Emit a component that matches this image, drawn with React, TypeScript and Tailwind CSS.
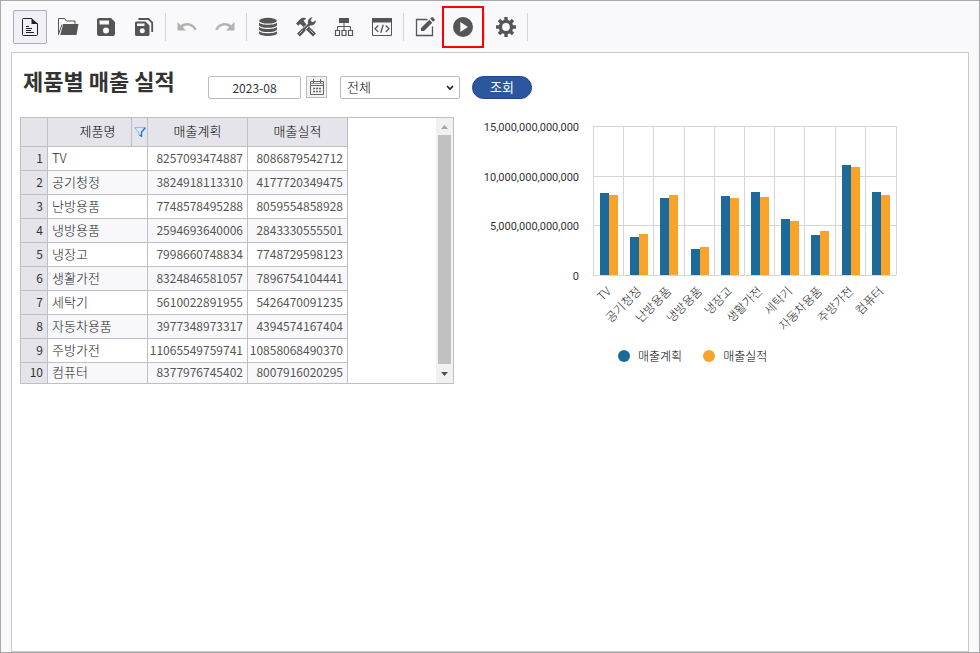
import { ReactNode } from 'react';

interface SalesRow {
    name: string;
    plan: number;
    actual: number;
}

const ROWS: SalesRow[] = [
    { name: 'TV', plan: 8257093474887, actual: 8086879542712 },
    { name: '공기청정', plan: 3824918113310, actual: 4177720349475 },
    { name: '난방용품', plan: 7748578495288, actual: 8059554858928 },
    { name: '냉방용품', plan: 2594693640006, actual: 2843330555501 },
    { name: '냉장고', plan: 7998660748834, actual: 7748729598123 },
    { name: '생활가전', plan: 8324846581057, actual: 7896754104441 },
    { name: '세탁기', plan: 5610022891955, actual: 5426470091235 },
    { name: '자동차용품', plan: 3977348973317, actual: 4394574167404 },
    { name: '주방가전', plan: 11065549759741, actual: 10858068490370 },
    { name: '컴퓨터', plan: 8377976745402, actual: 8007916020295 },
];

const PLAN_COLOR = '#1b6a9a';
const ACTUAL_COLOR = '#f9a429';

const Glyph = ({ children, className = 'w-5 h-5' }: { children: ReactNode; className?: string }) => (
    <svg viewBox="0 0 20 20" className={className} fill="currentColor" aria-hidden="true">
        {children}
    </svg>
);

const NewIcon = () => (
    <Glyph>
        <path d="M12 1.5H3.500a1 1 0 0 0-1 1v15a1 1 0 0 0 1 1h13a1 1 0 0 0 1-1V6.500" fill="none" stroke="#222" />
        <path d="M11.500 1l6.500 6h-6.500z" fill="#222" />
        <path d="M6 9.500h3M6 11.500h6M6 13.500h5M6 15.500h8" stroke="#222" />
    </Glyph>
);

const OpenIcon = () => (
    <Glyph className="w-[22px] h-5">
        <path d="M.5 17.500v-16h6l2 2.500h8.500v3" fill="none" stroke="currentColor" />
        <path d="M.5 17.500l3.500-10" fill="none" stroke="currentColor" />
        <path d="M5.200 7h15.300L18.500 18H2.300z" />
    </Glyph>
);

const SaveIcon = () => (
    <Glyph>
        <path
            fillRule="evenodd"
            d="M3 1h12l4 4v12a2 2 0 0 1-2 2H3a2 2 0 0 1-2-2V3a2 2 0 0 1 2-2zM3.500 3.500v4H13v-4zM10 10.500a3 3 0 1 0 0 6 3 3 0 0 0 0-6z"
        />
    </Glyph>
);

const SaveAllIcon = () => (
    <Glyph>
        <path
            fillRule="evenodd"
            d="M2.500 4.500h9l4 4v9a1.500 1.500 0 0 1-1.500 1.500H2.500A1.500 1.500 0 0 1 1 17.500V6a1.500 1.500 0 0 1 1.500-1.500zM3 6.500v2.500h7.500V6.500zM8.300 11.300a2.500 2.500 0 1 0 0 5 2.500 2.500 0 0 0 0-5z"
        />
        <path d="M4.500 2h10l3.700 3.700V15" fill="none" stroke="currentColor" strokeWidth="1.800" />
    </Glyph>
);

const UndoIcon = ({ flip = false }: { flip?: boolean }) => (
    <Glyph className={flip ? 'w-5 h-5 -scale-x-100 text-[#b2b2b2]' : 'w-5 h-5 text-[#b2b2b2]'}>
        <path d="M.5 5v8.500H9L5.700 10.300c3.300-2.800 9-2.500 11.800 3l2.300-.8C16.500 5.200 8.300 4.300 3.800 8.300z" />
    </Glyph>
);

const DataIcon = () => (
    <Glyph>
        <ellipse cx="10" cy="3.700" rx="9" ry="2.900" />
        <path d="M1 5.600c1.500 3 16.500 3 18 0v2.600c-1 3.400-17 3.400-18 0z" />
        <path d="M1 9.800c1.500 3 16.500 3 18 0v2.600c-1 3.400-17 3.400-18 0z" />
        <path d="M1 14c1.500 3 16.500 3 18 0v2.300c-1 3.600-17 3.600-18 0z" />
    </Glyph>
);

const ToolsIcon = () => (
    <Glyph>
        <path d="M0 6.500L4.300 2C6 .3 9 .2 10.300 1.600L7.500 3.500l1.300 2L20 16.500l-3 3L5.500 8 4 7 2.300 8.800z" />
        <path d="M1 16.500L12 6.400c-.6-2.900.9-5.700 4.400-6.200l-1.800 3.300 1.800 1.800 3.200-1.800c.4 3.300-2.100 5.300-5.100 4.800L4 19.500z" />
        <path d="M11.800 6.600L8.200 10.200M9.300 12.700l3.200-3.200" stroke="#f9f9fb" />
        <path d="M3.500 16.500l3-3M13.500 12.500l4 4" stroke="#f9f9fb" strokeWidth=".7" />
    </Glyph>
);

const TreeIcon = () => (
    <Glyph>
        <path d="M5 1h10v5H5z" />
        <path d="M10 6v7M3.500 13.500V9.500h13v4" fill="none" stroke="currentColor" />
        <path
            d="M1.500 13.500h4v5h-4zM8 13.500h4v5H8zM14.500 13.500h4v5h-4z"
            fill="none"
            stroke="currentColor"
            strokeWidth="1.200"
        />
    </Glyph>
);

const CodeIcon = () => (
    <Glyph>
        <path d="M0 1h20v4.500H0z" />
        <path d="M.5 5v13.500h19V5" fill="none" stroke="currentColor" />
        <path
            d="M6.300 8.500L3 11.700l3.300 3.200M13.700 8.500l3.300 3.200-3.300 3.200M11.200 7.800L8.800 15.700"
            fill="none"
            stroke="currentColor"
            strokeWidth="1.300"
        />
    </Glyph>
);

const EditIcon = () => (
    <Glyph>
        <path d="M12.500 2.500h-11v16h16v-9" fill="none" stroke="currentColor" strokeWidth="1.300" />
        <path d="M6 11l8.300-8.300 3 3L9 14H6z" />
        <path d="M15.200 1.800L16.500.5c.5-.4 1-.4 1.500 0l1.500 1.500c.4.5.4 1 0 1.500l-1.300 1.300z" />
    </Glyph>
);

const RunIcon = () => (
    <Glyph>
        <path fillRule="evenodd" d="M10 0a10 10 0 1 0 0 20 10 10 0 0 0 0-20zM7.300 5v10l7.700-5z" />
    </Glyph>
);

const GearIcon = () => (
    <Glyph>
        <circle cx="10" cy="10" r="5.600" fill="none" stroke="currentColor" strokeWidth="3.400" />
        <path
            d="M10 0v4.500M10 15.500V20M0 10h4.500M15.500 10H20M3 3l3 3M14 14l3 3M3 17l3-3M14 6l3-3"
            stroke="currentColor"
            strokeWidth="3.400"
        />
    </Glyph>
);

const CalendarIcon = () => (
    <svg viewBox="0 0 16 17" className="w-4 h-[17px]" fill="none" stroke="#666" aria-hidden="true">
        <path d="M1.500 2.500h13v13h-13zM1.500 6.500h13M4.500 0v4M11.500 0v4" />
        <path d="M1.500 4.500h13" stroke="#999" />
        <path d="M4 9.500h8M4 12.500h8" strokeWidth="1.500" strokeDasharray="2 1" />
    </svg>
);

const FilterIcon = () => (
    <svg viewBox="0 0 12 10" className="w-3 h-2.5" aria-hidden="true">
        <path d="M.7.700h10.600L7.500 5v4.300L4.700 7.500V5z" fill="#e4f0ff" stroke="#7fb0f0" />
        <path d="M11.300.700L7.500 5v4.300L5.500 8" fill="none" stroke="#2f6be0" strokeWidth="1.400" />
    </svg>
);

interface ToolButtonProps {
    label: string;
    children: ReactNode;
    className?: string;
}

const ToolButton = ({ label, children, className = 'w-[34px] h-[34px]' }: ToolButtonProps) => (
    <button
        type="button"
        aria-label={label}
        className={`flex shrink-0 items-center justify-center text-[#555] ${className}`}
    >
        {children}
    </button>
);

const Divider = () => <span className="w-px h-7 shrink-0 bg-[#d4d4d8]" />;

const Toolbar = () => (
    <header className="flex items-center h-12 px-3">
        <ToolButton label="새로 만들기" className="w-[34px] h-[34px] border border-[#adadb3] rounded-xs bg-[#f1f0f6]">
            <NewIcon />
        </ToolButton>
        <div className="flex items-center gap-1 pl-1">
            <ToolButton label="열기"><OpenIcon /></ToolButton>
            <ToolButton label="저장"><SaveIcon /></ToolButton>
            <ToolButton label="모두 저장"><SaveAllIcon /></ToolButton>
        </div>
        <div className="flex items-center gap-1 px-1">
            <Divider />
            <ToolButton label="실행 취소"><UndoIcon /></ToolButton>
            <ToolButton label="다시 실행"><UndoIcon flip /></ToolButton>
            <Divider />
        </div>
        <div className="flex items-center gap-1">
            <ToolButton label="데이터"><DataIcon /></ToolButton>
            <ToolButton label="도구"><ToolsIcon /></ToolButton>
            <ToolButton label="구조"><TreeIcon /></ToolButton>
            <ToolButton label="스크립트"><CodeIcon /></ToolButton>
            <Divider />
        </div>
        <div className="flex items-center pl-1">
            <ToolButton label="편집"><EditIcon /></ToolButton>
            <ToolButton label="실행" className="w-[42px] h-[42px] border-2 border-[#f00]"><RunIcon /></ToolButton>
            <Divider />
            <ToolButton label="설정" className="w-[42px] h-[34px]"><GearIcon /></ToolButton>
            <Divider />
        </div>
    </header>
);

const SearchBar = () => (
    <form className="flex items-center h-12 pl-[11px]" onSubmit={(e) => e.preventDefault()}>
        <h1 className="w-[185px] pb-3.5 text-[22px] leading-7 font-bold text-[#333] whitespace-nowrap">제품별 매출 실적</h1>
        <input
            type="text"
            aria-label="기준 월"
            defaultValue="2023-08"
            className="w-[93px] h-[23px] border border-[#bbb] rounded-xs bg-white text-center text-[12px] text-[#333]"
        />
        <button
            type="button"
            aria-label="달력"
            className="flex items-center justify-center w-[21px] h-[22px] ml-[5px] border border-[#bbb] bg-[#f2f2f2]"
        >
            <CalendarIcon />
        </button>
        <div className="relative ml-[13px]">
            <select
                aria-label="제품 구분"
                className="block w-[120px] h-[23px] pl-1.5 appearance-none border border-[#bbb] rounded-xs bg-white text-[13px] leading-5 font-light text-black"
            >
                <option>전체</option>
            </select>
            <svg viewBox="0 0 8 6" className="absolute right-1.5 top-[9px] w-2 h-1.5 pointer-events-none" aria-hidden="true">
                <path d="M1 1l3 3 3-3" fill="none" stroke="#222" strokeWidth="1.600" />
            </svg>
        </div>
        <button type="submit" className="w-[60px] h-[23px] ml-3 rounded-full border border-[#1f4690] bg-[#2c579f] text-[13px] leading-5 text-white">
            조회
        </button>
    </form>
);

const SalesGrid = () => (
    <div className="flex items-start justify-between w-[434px] h-[267px] shrink-0 border border-[#c0c0c4] overflow-hidden">
        <table className="w-[327px] table-fixed border-separate border-spacing-0 font-light text-[#222]">
            <thead>
                <tr className="h-[29px] bg-[#e5e4ea] text-[13px] text-black">
                    <th className="w-[27px] border-r border-b border-[#c0c0c4]" />
                    <th className="w-[100px] p-0 border-r border-b border-[#c0c0c4] font-light">
                        <div className="flex h-7">
                            <span className="flex-1 pl-4 leading-[26px]">제품명</span>
                            <button type="button" aria-label="필터" className="flex items-center justify-center w-4 border-l border-[#c0c0c4]">
                                <FilterIcon />
                            </button>
                        </div>
                    </th>
                    <th className="w-[100px] p-0 pb-0.5 border-r border-b border-[#c0c0c4] font-light">매출계획</th>
                    <th className="w-[100px] p-0 pb-0.5 border-r border-b border-[#c0c0c4] font-light">매출실적</th>
                </tr>
            </thead>
            <tbody className="text-[12px] leading-4">
                {ROWS.map((row, i) => (
                    <tr key={row.name} className="h-6 last:h-[21px] even:bg-[#f8f8fb]">
                        <th className="p-0 pr-1 pb-0.5 border-r border-b border-[#c0c0c4] bg-[#e5e4ea] text-right font-normal text-[#333]">
                            {i + 1}
                        </th>
                        <td className="p-0 pl-1 pb-0.5 border-r border-b border-[#c0c0c4] text-[13px]">{row.name}</td>
                        <td className="p-0 pr-1 pb-0.5 border-r border-b border-[#c0c0c4] text-right font-normal text-[#555]">{row.plan}</td>
                        <td className="p-0 pr-1 pb-0.5 border-r border-b border-[#c0c0c4] text-right font-normal text-[#555]">{row.actual}</td>
                    </tr>
                ))}
            </tbody>
        </table>
        {/* Scroll bar */}
        <div className="flex flex-col items-center w-[17px] h-full bg-[#f1f1f1]">
            <svg viewBox="0 0 17 17" className="w-[17px] h-[17px]" aria-hidden="true">
                <path d="M5 11h7L8.500 7z" fill="#a3a3a3" />
            </svg>
            <div className="w-[13px] h-[229px] bg-[#c1c1c1]" />
            <svg viewBox="0 0 17 17" className="w-[17px] h-[17px]" aria-hidden="true">
                <path d="M5 8h7l-3.500 4z" fill="#505050" />
            </svg>
        </div>
    </div>
);

const MAX_VALUE = 15000000000000;
const PLOT = { left: 113, top: 9, width: 303, height: 149 };

const SalesChart = () => {
    const step = (PLOT.width - 1) / ROWS.length;
    const bottom = PLOT.top + PLOT.height;
    const right = PLOT.left + PLOT.width;
    const barHeight = (value: number) => Math.round((value / MAX_VALUE) * PLOT.height);

    return (
        <figure className="w-[430px] shrink-0">
            <svg viewBox="0 0 430 229" className="block w-full" role="img" aria-label="제품별 매출 실적">
                {[15, 10, 5, 0].map((tick, i) => {
                    const y = PLOT.top + Math.round((PLOT.height * i) / 3);
                    return (
                        <g key={tick}>
                            <path d={`M${PLOT.left} ${y + 0.5}h${PLOT.width}`} stroke="#d6d6d6" />
                            <text x="99" y={y + 5} textAnchor="end" className="font-[Roboto,sans-serif] text-[11px]" fill="#333">
                                {(tick * 1e12).toLocaleString('en-US')}
                            </text>
                        </g>
                    );
                })}
                <path d={`M${right + 0.5} ${PLOT.top}v${PLOT.height}`} stroke="#d6d6d6" />
                {ROWS.map((row, i) => {
                    const left = PLOT.left + Math.round(step * i);
                    const x = left + 7;
                    return (
                        <g key={row.name}>
                            <path d={`M${left + 0.5} ${PLOT.top}v${PLOT.height}`} stroke="#d6d6d6" />
                            <rect x={x} y={bottom - barHeight(row.plan)} width="9" height={barHeight(row.plan)} fill={PLAN_COLOR} />
                            <rect x={x + 9} y={bottom - barHeight(row.actual)} width="9" height={barHeight(row.actual)} fill={ACTUAL_COLOR} />
                            <text
                                transform={`translate(${x + 12} ${bottom + 17}) rotate(-45)`}
                                textAnchor="end"
                                className="text-[12px] font-light"
                                fill="#222"
                            >
                                {row.name}
                            </text>
                        </g>
                    );
                })}
            </svg>
            <figcaption className="flex items-center gap-[21px] pl-[138px] text-[12px] leading-5 font-light text-black">
                <span className="flex items-center gap-2">
                    <i className="w-3 h-3 rounded-full bg-[#1b6a9a]" />
                    매출계획
                </span>
                <span className="flex items-center gap-2">
                    <i className="w-3 h-3 rounded-full bg-[#f9a429]" />
                    매출실적
                </span>
            </figcaption>
        </figure>
    );
};

export default function App() {
    return (
        <div className="flex flex-col min-h-screen pt-0.5 border border-[#a8a8a8] bg-[#f9f9fb] font-['Noto_Sans_CJK_KR',sans-serif]">
            <Toolbar />
            <main className="flex-1 mx-2.5 mt-px pt-2.5 border border-[#c8c8c8] bg-white">
                <SearchBar />
                <div className="flex items-start gap-[26px] pt-[6px] pl-2">
                    <SalesGrid />
                    <SalesChart />
                </div>
            </main>
        </div>
    );
}
